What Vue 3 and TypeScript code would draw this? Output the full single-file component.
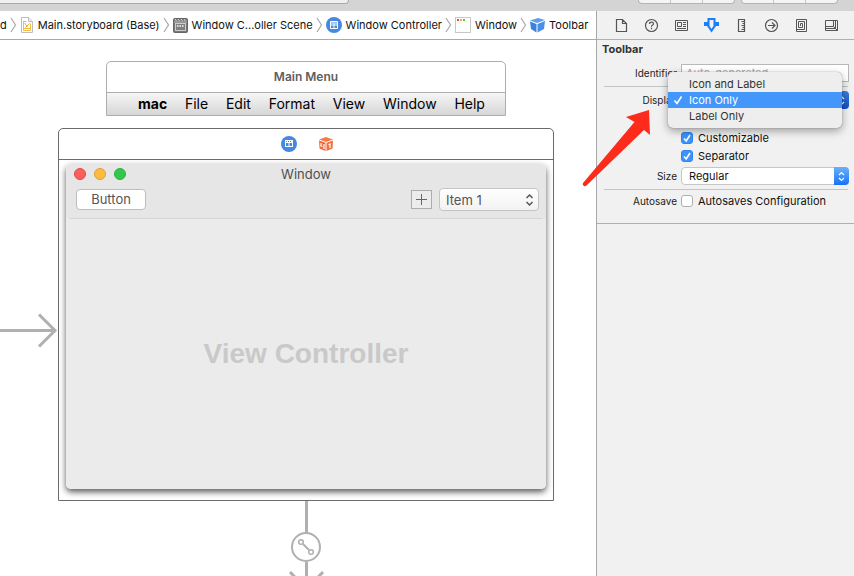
<script setup lang="ts">
import { ref } from 'vue'

type IconName = 'none' | 'doc' | 'scene' | 'controller' | 'window' | 'cube'
interface Crumb { label: string; icon: IconName }

const crumbs: Crumb[] = [
  { label: 'd', icon: 'none' },
  { label: 'Main.storyboard (Base)', icon: 'doc' },
  { label: 'Window C...oller Scene', icon: 'scene' },
  { label: 'Window Controller', icon: 'controller' },
  { label: 'Window', icon: 'window' },
  { label: 'Toolbar', icon: 'cube' },
]
const menus = ['mac', 'File', 'Edit', 'Format', 'View', 'Window', 'Help']
const tabs = ['File', 'Quick Help', 'Identity', 'Attributes', 'Size', 'Connections', 'Bindings', 'View Effects']
const displayModes = ['Icon and Label', 'Icon Only', 'Label Only']

const activeTab = ref('Attributes')
const display = ref('Icon Only')
const identifier = ref('')
const customizable = ref(true)
const separator = ref(true)
const autosaves = ref(false)
const size = ref('Regular')
const item = ref('Item 1')
</script>

<template>
  <div class="app">
    <header class="titlebar">
      <div class="status"></div>
      <div class="segments"><i></i><i></i><i></i></div>
      <div class="segments"><i></i><i></i><i></i></div>
    </header>

    <div class="body">
      <main class="editor">
        <nav class="jumpbar">
          <template v-for="(c, i) in crumbs" :key="c.label">
            <svg v-if="i > 0" class="chevron" width="7" height="16" viewBox="0 0 7 16"><path d="M1 1L5.500 8L1 15" fill="none" stroke="#a9a9a9" stroke-width="1.200" /></svg>
            <a href="#" class="crumb">
              <svg v-if="c.icon === 'doc'" width="14" height="16" viewBox="0 0 14 16">
                <path d="M1.500 .5H8.500L12.500 4.500V15.500H1.500Z" fill="#fff" stroke="#bdbdbd" />
                <path d="M8.500 .5V4.500H12.500" fill="#eee" stroke="#bdbdbd" />
                <path d="M3.500 4.500H6.500M3.500 4V13.500H10.500V6.500M3.500 11.500H10.500" fill="none" stroke="#f0bd48" />
                <path d="M4.500 6L7.500 10M9.500 6.500L5.500 10.500" stroke="#ecaf30" />
              </svg>
              <svg v-else-if="c.icon === 'scene'" width="15" height="15" viewBox="0 0 15 15">
                <rect x=".5" y=".5" width="14" height="14" rx="1" fill="#777" stroke="#666" />
                <path d="M2 1L3.500 3M5 1L6.500 3M8 1L9.500 3M11 1L12.500 3" stroke="#ddd" />
                <path d="M1 4H14" stroke="#bbb" />
                <rect x="2.500" y="5.500" width="10" height="7" fill="#808080" stroke="#ccc" />
                <path d="M4 8H11" stroke="#fff" stroke-width="1.500" stroke-dasharray="1.500 1" />
              </svg>
              <svg v-else-if="c.icon === 'controller'" width="16" height="16" viewBox="0 0 16 16">
                <circle cx="8" cy="8" r="8" fill="#458adf" />
                <path d="M4.500 4.500H11.500V11.500H4.500ZM4.500 8H11.500M8 6.500V11.500M4.500 6H11.500" fill="none" stroke="#fff" />
              </svg>
              <svg v-else-if="c.icon === 'window'" width="16" height="16" viewBox="0 0 16 16">
                <rect x=".5" y=".5" width="15" height="15" fill="#fff" stroke="#c8c8c8" />
                <path d="M2 2H4V4H2Z" fill="#ef4b3e" /><path d="M5 2H7V4H5Z" fill="#f3b32b" /><path d="M8 2H10V4H8Z" fill="#59c837" />
              </svg>
              <svg v-else-if="c.icon === 'cube'" width="15" height="16" viewBox="0 0 15 16">
                <path d="M0 3.500L8 1L15 3L7 6Z" fill="#5da0ed" />
                <path d="M0 4.500L6.500 7V15.500L1 12Z" fill="#3d82da" />
                <path d="M7.500 7L15 4L14 12L7.500 15.500Z" fill="#4a90e6" />
              </svg>
              <span>{{ c.label }}</span>
            </a>
          </template>
        </nav>

        <section class="canvas">
          <svg class="entry" width="58" height="40" viewBox="0 0 58 40">
            <path d="M0 20.500H55M39 4.500L55 20.500L39 36.500" fill="none" stroke="#b0b0b0" stroke-width="3" />
          </svg>

          <div class="menu-scene">
            <h2>Main Menu</h2>
            <div class="menus">
              <button v-for="m in menus" :key="m" type="button">{{ m }}</button>
            </div>
          </div>

          <div class="scene">
            <div class="dock">
              <svg width="16" height="16" viewBox="0 0 16 16">
                <circle cx="8" cy="8" r="8" fill="#458adf" />
                <path d="M4 4H12V11H4Z" fill="#fff" />
                <path d="M5 5.500H11" stroke="#458adf" stroke-dasharray="1 1" />
                <path d="M5 7H7.500V10H5ZM8.500 7H11V10H8.500Z" fill="#458adf" />
              </svg>
              <svg width="14" height="14" viewBox="0 0 14 14">
                <path d="M0 2.500L7 0L14 2.500L7 5Z" fill="#f77a4b" />
                <path d="M0 3.500L6.500 5.700V14L.5 11.500Z" fill="#ee683b" />
                <path d="M7.500 5.700L14 3.500L13.500 11.500L7.500 14Z" fill="#f4713f" />
                <path d="M2 6V9L3.500 9.500M5 7V12M9.500 7.700L11 7V11" fill="none" stroke="#fff" stroke-width="1.200" />
              </svg>
            </div>

            <div class="window">
              <div class="chrome">
                <div class="title">
                  <span class="lights"><i class="red"></i><i class="amber"></i><i class="green"></i></span>
                  <span class="name">Window</span>
                </div>
                <div class="tools">
                  <button type="button" class="push">Button</button>
                  <button type="button" class="plus" aria-label="Add">
                    <svg width="11" height="11" viewBox="0 0 11 11"><path d="M5.500 0V11M0 5.500H11" stroke="#666" /></svg>
                  </button>
                  <span class="popup">
                    <select v-model="item" aria-label="Item"><option>Item 1</option><option>Item 2</option></select>
                    <svg width="9" height="14" viewBox="0 0 9 14"><path d="M1.500 5L4.500 2L7.500 5M1.500 9L4.500 12L7.500 9" fill="none" stroke="#555" stroke-width="1.500" /></svg>
                  </span>
                </div>
              </div>
              <div class="content">View Controller</div>
            </div>
          </div>

          <svg class="segue" width="40" height="100" viewBox="0 0 40 100">
            <g fill="none" stroke="#b0b0b0">
              <path d="M20.500 0V32M20.500 61V94M4 71L20.500 88L37 71" stroke-width="3" />
              <circle cx="20" cy="46" r="14" fill="#fff" stroke-width="2" />
              <circle cx="15" cy="41" r="2.300" stroke-width="1.500" />
              <circle cx="25" cy="51" r="2.300" stroke-width="1.500" />
              <path d="M17 43L23 49" stroke-width="2" />
            </g>
          </svg>
        </section>
      </main>

      <aside class="inspector">
        <div class="tabs">
          <button v-for="t in tabs" :key="t" type="button" :aria-label="t" :class="{ active: activeTab === t }" @click="activeTab = t">
            <svg width="16" height="16" viewBox="0 0 16 16" fill="none" stroke="currentColor">
              <path v-if="t === 'File'" d="M3.500 2.500H9.500L13.500 6.500V14.500H3.500ZM9.500 2.500V6.500H13.500" stroke-width="1.200" />
              <template v-else-if="t === 'Quick Help'">
                <circle cx="8.500" cy="8.500" r="6" stroke-width="1.200" />
                <path d="M6.500 7Q6.500 5.200 8.500 5.200T10.500 6.800Q10.500 7.800 9.200 8.300Q8.500 8.700 8.500 9.800M8.500 10.800V12.200" stroke-width="1.200" />
              </template>
              <path v-else-if="t === 'Identity'" d="M2.500 3.500H14.500V13.500H2.500ZM4.500 5.500H8.500V9.500H4.500ZM10 5.500H13M10 7.500H13M10 9.500H13M4 11.500H13" />
              <path v-else-if="t === 'Attributes'" d="M4.500 1H12.500V5H16V9H13L8.500 15.500L4 9H1V5H4.500ZM6.500 3V9L8.500 12L10.500 9V3Z" fill="currentColor" fill-rule="evenodd" stroke="none" />
              <path v-else-if="t === 'Size'" d="M5.500 2.500H11.500V14.500H5.500ZM8.500 4.500H11.500M9.500 6.500H11.500M8.500 8.500H11.500M9.500 10.500H11.500M8.500 12.500H11.500" stroke-width="1.200" />
              <path v-else-if="t === 'Connections'" d="M14.500 8.500A6 6 0 1 1 2.500 8.500A6 6 0 1 1 14.500 8.500ZM5 8.500H12M9 5.500L12 8.500L9 11.500" stroke-width="1.200" />
              <path v-else-if="t === 'Bindings'" d="M3.500 14.500H13.500V2.500H3.500V14.500M3.500 12.500H11.500V4.500H5.500V10.500H9.500V6.500H7.500V9" />
              <path v-else d="M2.500 3.500H14.500V13.500H2.500ZM2.500 9.500H10.500V3.500M2.500 11.500H12.500V3.500M10.500 9.500L14.500 13.500" />
            </svg>
          </button>
        </div>

        <form class="attrs" @submit.prevent>
          <h3>Toolbar</h3>
          <div class="row first">
            <label class="key" for="identifier">Identifier</label>
            <input id="identifier" v-model="identifier" class="text" type="text" placeholder="Auto-generated">
          </div>
          <hr>
          <div class="row">
            <label class="key" for="display">Display</label>
            <span class="picker">
              <select id="display" v-model="display"><option v-for="d in displayModes" :key="d">{{ d }}</option></select>
              <span class="cap dark"><svg width="7" height="11" viewBox="0 0 7 11"><path d="M1 4L3.500 1.500L6 4M1 7L3.500 9.500L6 7" fill="none" stroke="#fff" stroke-width="1.200" /></svg></span>
            </span>
            <div class="choices" role="listbox" aria-label="Display">
              <button v-for="d in displayModes" :key="d" type="button" role="option" :aria-selected="display === d" :class="{ chosen: display === d }" @click="display = d">
                <svg width="10" height="10" viewBox="0 0 10 10"><path v-if="display === d" d="M1.500 5.500L4 8.500L8.500 1.500" fill="none" stroke="#fff" stroke-width="1.600" /></svg>
                {{ d }}
              </button>
            </div>
          </div>
          <label class="row check spaced"><input v-model="customizable" type="checkbox"><span>Customizable</span></label>
          <label class="row check"><input v-model="separator" type="checkbox"><span>Separator</span></label>
          <div class="row size">
            <label class="key" for="size">Size</label>
            <span class="picker">
              <select id="size" v-model="size"><option>Regular</option><option>Small</option></select>
              <span class="cap"><svg width="7" height="11" viewBox="0 0 7 11"><path d="M1 4L3.500 1.500L6 4M1 7L3.500 9.500L6 7" fill="none" stroke="#fff" stroke-width="1.200" /></svg></span>
            </span>
          </div>
          <hr class="tight">
          <div class="row">
            <span class="key">Autosave</span>
            <label class="inline"><input v-model="autosaves" type="checkbox"><span>Autosaves Configuration</span></label>
          </div>
        </form>
      </aside>
    </div>

    <svg class="pointer" width="72" height="78" viewBox="0 0 72 78">
      <path d="M69 0L46 7L54.500 12L3 73Q2 75 4 76Q5 77 7 75L64 20L70 25Z" fill="#fc2b1c" />
    </svg>
  </div>
</template>

<style>
body { margin: 0; background: #fff; }
</style>

<style scoped>
* { box-sizing: border-box; }
.app {
  position: relative;
  display: flex;
  flex-direction: column;
  height: 100vh;
  overflow: hidden;
  font: 11px/16px Inter, "Liberation Sans", sans-serif;
  color: #111;
}
button, select, input { font: inherit; color: inherit; margin: 0; padding: 0; border: 0; background: none; }
select { appearance: none; }
svg { display: block; flex: none; }

.titlebar {
  flex: none;
  display: flex;
  align-items: flex-start;
  gap: 6px;
  height: 11px;
  padding-right: 16px;
  background: #d4d4d4;
}
.status {
  width: 349px;
  height: 4px;
  margin-right: auto;
  background: #f0f0f0;
  border-bottom: 1px solid #ababab;
  border-right: 1px solid #ababab;
  border-radius: 0 0 4px 0;
}
.segments { display: flex; width: 97px; height: 4px; border: 1px solid #b4b4b4; border-top: 0; border-radius: 0 0 4px 4px; background: #f4f4f4; }
.segments i { flex: 1; }
.segments i + i { border-left: 1px solid #c4c4c4; }

.body { flex: 1; display: flex; min-height: 0; }
.editor { flex: 1; display: flex; flex-direction: column; min-width: 0; background: #fff; }
.jumpbar {
  flex: none;
  display: flex;
  align-items: center;
  height: 29px;
  border-bottom: 1px solid #a9a9a9;
  overflow: hidden;
  white-space: nowrap;
}
.crumb { display: flex; align-items: center; gap: 4px; color: #111; text-decoration: none; }
.chevron { margin: 0 3px; }

.canvas { position: relative; flex: 1; overflow: hidden; }
.entry { position: absolute; left: 0; top: 270px; }
.menu-scene {
  position: absolute;
  left: 106px;
  top: 21px;
  width: 400px;
  border: 1px solid #adadad;
  border-radius: 5px 5px 0 0;
}
.menu-scene h2 { margin: 0; font-size: 12px; line-height: 30px; font-weight: 600; text-align: center; color: #606060; }
.menus {
  display: flex;
  justify-content: space-between;
  height: 23px;
  padding: 0 20px 0 31px;
  border-top: 1px solid #adadad;
  background: linear-gradient(#f6f6f6, #d6d6d6);
}
.menus button { font-size: 14px; line-height: 22px; color: #000; }
.menus button:first-child { font-weight: 700; }

.scene {
  position: absolute;
  left: 58px;
  top: 88px;
  width: 496px;
  height: 373px;
  display: flex;
  flex-direction: column;
  background: #fff;
  border: 1px solid #6b6b6b;
  border-radius: 5px 5px 0 0;
}
.dock { display: flex; flex: none; align-items: center; justify-content: center; gap: 22px; height: 31px; padding-left: 2px; border-bottom: 1px solid #6b6b6b; }
.window {
  flex: 1;
  display: flex;
  flex-direction: column;
  margin: 4px 7px 11px;
  background: linear-gradient(#e6e6e6 54px, #ebebeb 54px);
  border-radius: 5px;
  box-shadow: 0 3px 6px rgba(0, 0, 0, .65);
}
.chrome { flex: none; height: 55px; margin: 0 3px; border-bottom: 1px solid #d6d6d6; }
.title { display: grid; grid-template-columns: 1fr auto 1fr; align-items: center; height: 20px; padding: 0 5px; }
.lights { display: flex; gap: 8px; }
.lights i { width: 12px; height: 12px; border-radius: 6px; border: 1px solid #de4b46; background: #fc605c; }
.lights .amber { border-color: #dd9f37; background: #fdbc40; }
.lights .green { border-color: #2eaf3e; background: #34c84a; }
.name { font-size: 13px; color: #505050; }
.tools { display: flex; align-items: center; padding: 4px 4px 0 7px; gap: 7px; }
.push { width: 70px; height: 21px; margin-right: auto; border: 1px solid #bdbdbd; border-radius: 4px; background: #fff; font-size: 13px; line-height: 19px; color: #555; }
.plus { display: grid; place-items: center; width: 21px; height: 19px; border: 1px solid #adadad; background: #ececec; }
.popup { position: relative; width: 100px; }
.popup select { display: block; width: 100%; height: 23px; padding-left: 6px; border: 1px solid #c4c4c4; border-radius: 4px; background: linear-gradient(#fff, #f2f2f2); font-size: 13px; color: #555; }
.popup svg { position: absolute; right: 5px; top: 5px; pointer-events: none; }
.content { flex: 1; display: grid; place-items: center; font: bold 28px/32px "Liberation Sans", sans-serif; color: #c9c9c9; }
.segue { position: absolute; left: 286px; top: 461px; }

.inspector { flex: none; width: 258px; border-left: 1px solid #a9a9a9; background: #f1f1f1; }
.tabs { display: flex; height: 29px; padding: 0 8px 0 9px; border-bottom: 1px solid #b0b0b0; color: #555; }
.tabs button { flex: 1; display: grid; place-items: center; }
.tabs .active { color: #1b7dfa; }
.attrs { padding-bottom: 13px; border-bottom: 1px solid #b0b0b0; }
h3 { margin: 0; padding: 1px 5px 0; font-size: 11px; line-height: 17px; font-weight: 700; color: #333; }
.row { position: relative; display: grid; grid-template-columns: 80px 1fr; column-gap: 4px; align-items: center; padding-right: 5px; height: 18px; }
.first { margin-top: 6px; }
.key { font-size: 10px; text-align: right; color: #222; }
.text { width: 100%; height: 18px; padding: 0 4px; border: 1px solid #b8b8b8; background: #fff; }
.text::placeholder { color: #aaa; opacity: 1; }
hr { height: 1px; margin: 4px 6px 4px 7px; border: 0; background: #c4c4c4; }
.tight { margin-bottom: 2px; }
.picker { position: relative; display: block; height: 18px; }
.picker select { display: block; width: 100%; height: 18px; padding: 0 22px 0 7px; border: 1px solid #c6c6c6; border-radius: 4px; background: #fff; }
.cap { position: absolute; top: 0; right: 0; display: grid; place-items: center; width: 15px; height: 18px; border-radius: 0 4px 4px 0; background: linear-gradient(#6ab1fb, #1673f6); pointer-events: none; }
.cap.dark { background: linear-gradient(#3b7ee0, #0f50c2); }
.check { padding-left: 84px; grid-template-columns: 12px 1fr; column-gap: 5px; }
.spaced { margin-top: 20px; }
.inline { display: grid; grid-template-columns: 12px 1fr; column-gap: 5px; align-items: center; }
.check input, .inline input { appearance: none; width: 12px; height: 12px; border: 1px solid #b0b0b0; border-radius: 3px; background: #fff; }
.check input:checked, .inline input:checked {
  border-color: #2f84f3;
  background: url("data:image/svg+xml,%3Csvg xmlns='http://www.w3.org/2000/svg' viewBox='0 0 10 10'%3E%3Cpath d='M2 5.500L4.200 8L8 2' fill='none' stroke='white' stroke-width='1.600'/%3E%3C/svg%3E") #3d93f9;
}
.size { margin-top: 2px; }
.choices {
  position: absolute;
  z-index: 1;
  left: 71px;
  top: -19px;
  width: 174px;
  padding: 4px 0;
  border-radius: 5px;
  background: #eee;
  box-shadow: 0 0 1px rgba(0, 0, 0, .5), 0 3px 8px rgba(0, 0, 0, .35);
}
.choices button { display: flex; align-items: center; gap: 6px; width: 100%; height: 16px; padding-left: 5px; text-align: left; color: #333; }
.choices .chosen { background: #4397fa; color: #fff; }
.pointer { position: absolute; left: 580px; top: 110px; z-index: 2; pointer-events: none; }
</style>
